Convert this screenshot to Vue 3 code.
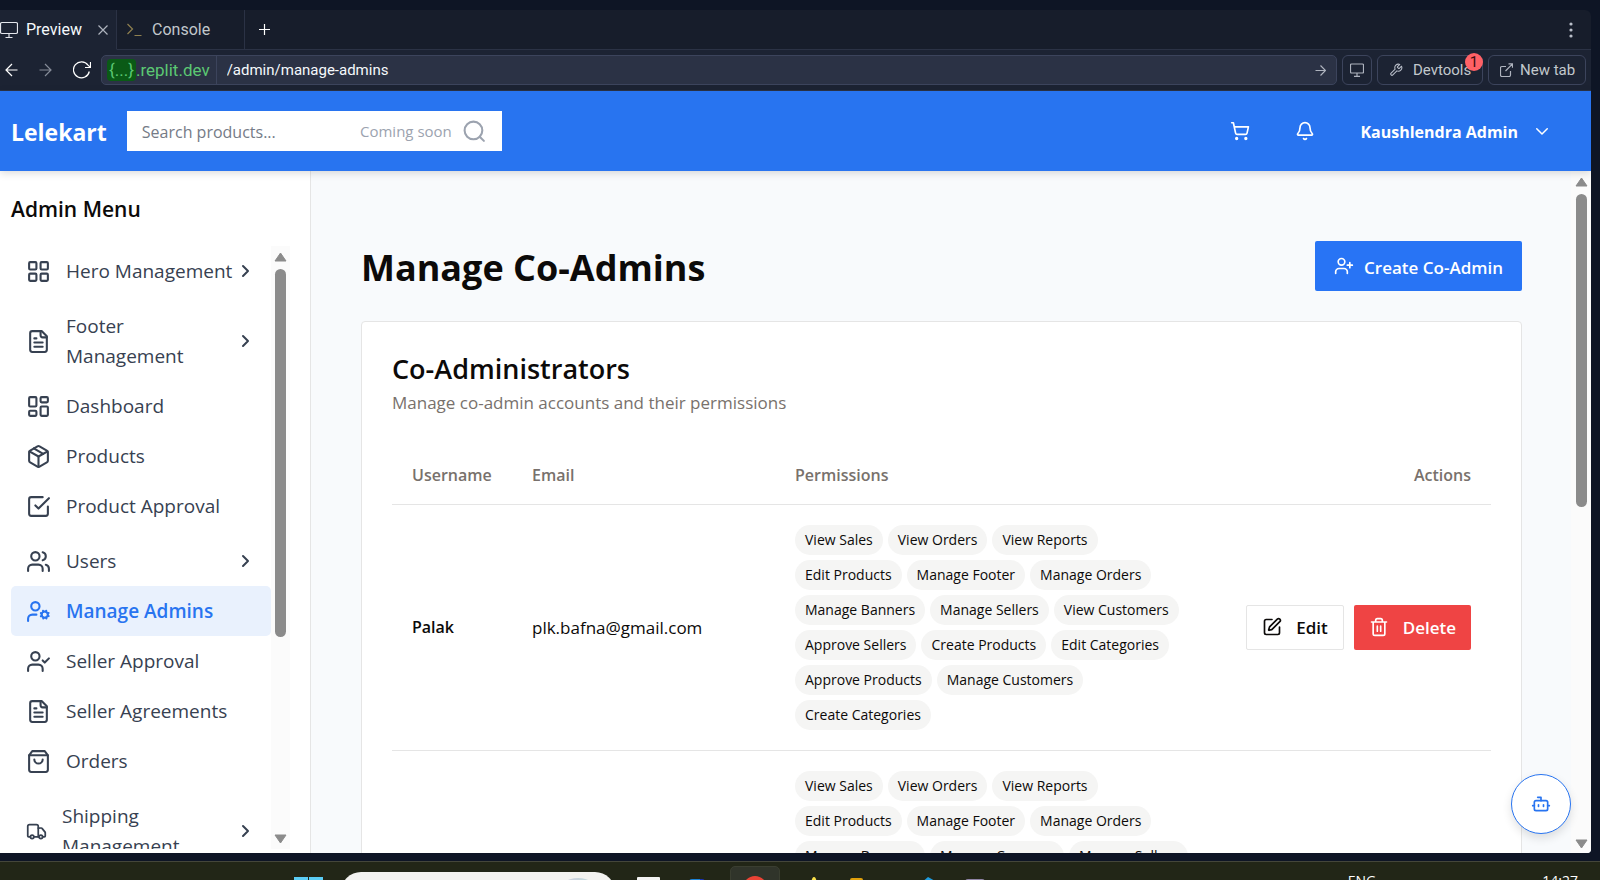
<script setup>
const nav = [
  { label: 'Hero Management', icon: 'grid', group: true },
  { label: 'Footer Management', icon: 'file', group: true },
  { label: 'Dashboard', icon: 'dashboard' },
  { label: 'Products', icon: 'box' },
  { label: 'Product Approval', icon: 'check' },
  { label: 'Users', icon: 'users', group: true },
  { label: 'Manage Admins', icon: 'cog', active: true },
  { label: 'Seller Approval', icon: 'usercheck' },
  { label: 'Seller Agreements', icon: 'file' },
  { label: 'Orders', icon: 'bag' },
  { label: 'Shipping Management', icon: 'truck', group: true, small: true },
]

const icons = {
  grid: '<rect width="7" height="7" x="3" y="3" rx="1"/><rect width="7" height="7" x="14" y="3" rx="1"/><rect width="7" height="7" x="14" y="14" rx="1"/><rect width="7" height="7" x="3" y="14" rx="1"/>',
  file: '<path d="M15 2H6a2 2 0 0 0-2 2v16a2 2 0 0 0 2 2h12a2 2 0 0 0 2-2V7Z"/><path d="M14 2v4a2 2 0 0 0 2 2h4"/><path d="M10 9H8"/><path d="M16 13H8"/><path d="M16 17H8"/>',
  dashboard: '<rect width="7" height="9" x="3" y="3" rx="1"/><rect width="7" height="5" x="14" y="3" rx="1"/><rect width="7" height="9" x="14" y="12" rx="1"/><rect width="7" height="5" x="3" y="16" rx="1"/>',
  box: '<path d="m7.5 4.27 9 5.15"/><path d="M21 8a2 2 0 0 0-1-1.73l-7-4a2 2 0 0 0-2 0l-7 4A2 2 0 0 0 3 8v8a2 2 0 0 0 1 1.73l7 4a2 2 0 0 0 2 0l7-4A2 2 0 0 0 21 16Z"/><path d="m3.3 7 8.7 5 8.7-5"/><path d="M12 22V12"/>',
  check: '<path d="m9 11 3 3L22 4"/><path d="M21 12v7a2 2 0 0 1-2 2H5a2 2 0 0 1-2-2V5a2 2 0 0 1 2-2h11"/>',
  users: '<path d="M16 21v-2a4 4 0 0 0-4-4H6a4 4 0 0 0-4 4v2"/><circle cx="9" cy="7" r="4"/><path d="M22 21v-2a4 4 0 0 0-3-3.87"/><path d="M16 3.13a4 4 0 0 1 0 7.75"/>',
  cog: '<circle cx="9" cy="7" r="4"/><path d="M10 15H6a4 4 0 0 0-4 4v2"/><circle cx="18" cy="15" r="3"/><path d="m21.7 16.4-.9-.3"/><path d="m15.2 13.9-.9-.3"/><path d="m16.6 18.7.3-.9"/><path d="m19.1 12.2.3-.9"/><path d="m19.6 18.7-.4-1"/><path d="m16.8 12.3-.4-1"/><path d="m14.3 16.6 1-.4"/><path d="m20.7 13.8 1-.4"/>',
  usercheck: '<path d="M16 21v-2a4 4 0 0 0-4-4H6a4 4 0 0 0-4 4v2"/><circle cx="9" cy="7" r="4"/><path d="m16 11 2 2 4-4"/>',
  bag: '<path d="M6 2 3 6v14a2 2 0 0 0 2 2h14a2 2 0 0 0 2-2V6l-3-4Z"/><path d="M3 6h18"/><path d="M16 10a4 4 0 0 1-8 0"/>',
  truck: '<path d="M14 18V6a2 2 0 0 0-2-2H4a2 2 0 0 0-2 2v11a1 1 0 0 0 1 1h2"/><path d="M15 18H9"/><path d="M19 18h2a1 1 0 0 0 1-1v-3.65a1 1 0 0 0-.22-.62l-3.48-4.35A1 1 0 0 0 17.52 8H14"/><circle cx="17" cy="18" r="2"/><circle cx="7" cy="18" r="2"/>',
}

const rows = [
  {
    name: 'Palak',
    email: 'plk.bafna@gmail.com',
    permissions: ['View Sales', 'View Orders', 'View Reports', 'Edit Products', 'Manage Footer', 'Manage Orders', 'Manage Banners', 'Manage Sellers', 'View Customers', 'Approve Sellers', 'Create Products', 'Edit Categories', 'Approve Products', 'Manage Customers', 'Create Categories'],
  },
  {
    name: '',
    email: '',
    permissions: ['View Sales', 'View Orders', 'View Reports', 'Edit Products', 'Manage Footer', 'Manage Orders', 'Manage Banners', 'Manage Coupons', 'Manage Sellers'],
  },
]
</script>

<template>
  <div class="screen">
    <div class="window">
      <div class="tabs">
        <button class="tab active">
          <svg width="18" height="18" viewBox="0 0 18 18" class="thin"><rect x="0.5" y="1.5" width="17" height="11" rx="1.5" /><path d="M9 13v3M5.5 16.5h7" /></svg>
          <span class="tab-name">Preview</span>
          <svg width="10" height="10" viewBox="0 0 10 10" class="thin dim"><path d="m.5.5 9 9m0-9-9 9" /></svg>
        </button>
        <button class="tab console">
          <svg width="15" height="14" viewBox="0 0 15 14" class="thin prompt"><path d="m.5 1 5 5-5 5M7.5 12.5h7" /></svg>
          <span>Console</span>
        </button>
        <button class="tab plus" aria-label="New tab">
          <svg width="11" height="11" viewBox="0 0 11 11" class="thin white"><path d="M5.5 0v11M0 5.5h11" /></svg>
        </button>
        <button class="more" aria-label="More">
          <svg width="4" height="16" viewBox="0 0 4 16"><g fill="#b9bec9"><circle cx="2" cy="2" r="1.6" /><circle cx="2" cy="8" r="1.6" /><circle cx="2" cy="14" r="1.6" /></g></svg>
        </button>
      </div>

      <div class="toolbar">
        <div class="history">
          <button aria-label="Back"><svg width="13" height="14" viewBox="0 0 13 14" class="thin white"><path d="M12.5 7H1m6-6L1 7l6 6" /></svg></button>
          <button aria-label="Forward"><svg width="13" height="14" viewBox="0 0 13 14" class="thin grey"><path d="M.5 7H12M6 1l6 6-6 6" /></svg></button>
          <button aria-label="Reload"><svg width="18" height="18" viewBox="0 0 18 18" class="thin white"><path d="M16.3 10.5A8 8 0 1 1 15 4.2L17.5 6.500M17.5 1v5.500H12" /></svg></button>
        </div>
        <div class="address">
          <span class="host"><b>{...}</b>.replit.dev</span>
          <input class="path" value="/admin/manage-admins" aria-label="Path" />
          <button class="go" aria-label="Go"><svg width="11" height="11" viewBox="0 0 11 11" class="thin dim"><path d="M.5 5.5h10M5.5.5l5 5-5 5" /></svg></button>
        </div>
        <button class="tool square" aria-label="Device">
          <svg width="14" height="14" viewBox="0 0 14 14" class="thin dim"><rect x="0.5" y="1" width="13" height="9" rx="1" /><path d="M7 10v3M4 13.3h6" /></svg>
        </button>
        <button class="tool devtools">
          <svg width="14" height="14" viewBox="0 0 24 24" fill="none" stroke="#b9bec9" stroke-width="1.8" stroke-linejoin="round"><path d="M14.7 6.3a1 1 0 0 0 0 1.4l1.6 1.6a1 1 0 0 0 1.4 0l3.77-3.77a6 6 0 0 1-7.94 7.94l-6.91 6.91a2.12 2.12 0 0 1-3-3l6.91-6.91a6 6 0 0 1 7.94-7.94l-3.76 3.76z" /></svg>
          <span>Devtools</span>
          <i class="count">1</i>
        </button>
        <button class="tool newtab">
          <svg width="13" height="14" viewBox="0 0 13 14" class="thin dim"><path d="M6 3.5H2a1.5 1.5 0 0 0-1.5 1.5v7A1.5 1.5 0 0 0 2 13.5h7a1.5 1.5 0 0 0 1.5-1.5V8M8.5.8h4v4M12.5.8 5.5 8" /></svg>
          <span>New tab</span>
        </button>
      </div>

      <div class="site">
        <header class="header">
          <a class="brand" href="#">Lelekart</a>
          <div class="search">
            <input type="text" placeholder="Search products..." aria-label="Search products" />
            <span class="soon">Coming soon</span>
            <svg width="25" height="25" viewBox="0 0 24 24" class="line"><circle cx="11" cy="11" r="8.5" /><path d="m21 21-4-4" /></svg>
          </div>
          <div class="account">
            <button aria-label="Cart"><svg width="20" height="20" viewBox="0 0 24 24" class="line"><circle cx="8" cy="21" r="1" /><circle cx="19" cy="21" r="1" /><path d="M2.05 2.05h2l2.66 12.42a2 2 0 0 0 2 1.58h9.78a2 2 0 0 0 1.95-1.57l1.65-7.43H5.12" /></svg></button>
            <button aria-label="Notifications"><svg width="20" height="20" viewBox="0 0 24 24" class="line"><path d="M10.268 21a2 2 0 0 0 3.464 0" /><path d="M3.262 15.326A1 1 0 0 0 4 17h16a1 1 0 0 0 .74-1.673C19.41 13.956 18 12.499 18 8A6 6 0 0 0 6 8c0 4.499-1.411 5.956-2.738 7.326" /></svg></button>
            <button class="user"><span>Kaushlendra Admin</span>
              <svg width="20" height="20" viewBox="0 0 24 24" class="line"><path d="m5 9 7 7 7-7" /></svg>
            </button>
          </div>
        </header>

        <aside class="sidebar">
          <h2>Admin Menu</h2>
          <div class="scroller">
            <nav>
              <a v-for="item in nav" :key="item.label" href="#" :class="{ group: item.group, active: item.active, small: item.small }">
                <svg viewBox="0 0 24 24" class="line" v-html="icons[item.icon]"></svg>
                <span>{{ item.label }}</span>
                <svg v-if="item.group" class="line chevron" viewBox="0 0 20 20"><path d="m7 5 5 5-5 5" /></svg>
              </a>
            </nav>
            <div class="track">
              <svg width="13" height="10" viewBox="0 0 13 10"><path d="M6.5 1 12 9H1Z" /></svg>
              <div class="rail"><div class="thumb side"></div></div>
              <svg width="13" height="10" viewBox="0 0 13 10"><path d="M6.5 9 12 1H1Z" /></svg>
            </div>
          </div>
        </aside>

        <main class="main">
          <div class="title">
            <h1>Manage Co-Admins</h1>
            <button class="create">
              <svg width="20" height="20" viewBox="0 0 24 24" class="line"><path d="M16 21v-2a4 4 0 0 0-4-4H6a4 4 0 0 0-4 4v2" /><circle cx="9" cy="7" r="4" /><path d="M19 8v6M22 11h-6" /></svg>
              <span>Create Co-Admin</span>
            </button>
          </div>
          <section class="card">
            <h3>Co-Administrators</h3>
            <p>Manage co-admin accounts and their permissions</p>
            <table>
              <thead>
                <tr>
                  <th class="c-name">Username</th>
                  <th class="c-mail">Email</th>
                  <th>Permissions</th>
                  <th class="c-act">Actions</th>
                </tr>
              </thead>
              <tbody>
                <tr v-for="(row, i) in rows" :key="i">
                  <td class="name">{{ row.name }}</td>
                  <td>{{ row.email }}</td>
                  <td>
                    <div class="chips"><span v-for="p in row.permissions" :key="p">{{ p }}</span></div>
                  </td>
                  <td>
                    <div v-if="row.name" class="actions">
                      <button class="edit">
                        <svg width="20" height="20" viewBox="0 0 24 24" class="line"><path d="M12 3H5a2 2 0 0 0-2 2v14a2 2 0 0 0 2 2h14a2 2 0 0 0 2-2v-7" /><path d="M18.375 2.625a1 1 0 0 1 3 3l-9.013 9.014a2 2 0 0 1-.853.505l-2.873.84a.5.5 0 0 1-.62-.62l.84-2.873a2 2 0 0 1 .506-.852z" /></svg>
                        Edit
                      </button>
                      <button class="delete">
                        <svg width="20" height="20" viewBox="0 0 24 24" class="line"><path d="M3 6h18M19 6v14c0 1-1 2-2 2H7c-1 0-2-1-2-2V6M8 6V4c0-1 1-2 2-2h4c1 0 2 1 2 2v2M10 11v6M14 11v6" /></svg>
                        Delete
                      </button>
                    </div>
                  </td>
                </tr>
              </tbody>
            </table>
          </section>
        </main>
        <div class="track page">
          <svg width="13" height="10" viewBox="0 0 13 10"><path d="M6.5 1 12 9H1Z" /></svg>
          <div class="rail"><div class="thumb body"></div></div>
          <svg width="13" height="10" viewBox="0 0 13 10"><path d="M6.5 9 12 1H1Z" /></svg>
        </div>
        <button class="bot" aria-label="Assistant">
          <svg width="20" height="20" viewBox="0 0 24 24" class="line"><path d="M12 8V4H8" /><rect width="16" height="12" x="4" y="8" rx="2" /><path d="M2 14h2M20 14h2M15 13v2M9 13v2" /></svg>
        </button>
      </div>
    </div>

    <footer class="taskbar">
      <div class="apps">
        <svg class="app-start" width="29" height="29" viewBox="0 0 29 29"><path d="M0 0h14v14H0zM15 0h14v14H15zM0 15h14v14H0zM15 15h14v14H15z" fill="#5bcdf5" /></svg>
        <div class="pill"><i></i></div>
        <svg class="app-view" width="24" height="24" viewBox="0 0 24 24"><rect width="23" height="20" rx="1" fill="#f3f3f3" /></svg>
        <svg class="app-blue" width="16" height="20" viewBox="0 0 16 20"><path d="M0 20V5q0-3 3-3h8v18z" fill="#1b83d8" /><path d="M11 2h2a3 3 0 0 1 3 3v15h-5z" fill="#1b35b8" /></svg>
        <div class="app-open"><svg width="24" height="24" viewBox="0 0 24 24"><circle cx="12" cy="12" r="12" fill="#ea4335" /></svg></div>
        <svg class="app-star" width="12" height="20" viewBox="0 0 12 20"><path d="M6 0q1 0 1.5 1L12 12H0L4.5 1Q5 0 6 0Z" fill="#f9e04a" /></svg>
        <svg class="app-folder" width="13" height="20" viewBox="0 0 13 20"><path d="M0 20V3q0-2 2-2h9q2 0 2 2v17z" fill="#dfa00c" /></svg>
        <svg class="app-code" width="16" height="20" viewBox="0 0 16 20"><path d="M0 6 7 0l9 5v15H0Z" fill="#1f9cdf" /></svg>
        <svg class="app-last" width="20" height="20" viewBox="0 0 20 20"><path d="M0 20V5q0-3 3-3h14q3 0 3 3v15z" fill="#8f84a6" /></svg>
      </div>
      <div class="tray"><span>ENG</span><span>14:27</span></div>
    </footer>
  </div>
</template>

<style>
html,
body {
  height: 100%;
  margin: 0;
  overflow: hidden;
}
</style>

<style scoped>
* {
  box-sizing: border-box;
}
.screen {
  height: 100vh;
  display: flex;
  flex-direction: column;
  background: #0e1525;
  padding-top: 10px;
  color: #0c0a09;
  font-family: 'Open Sans', 'Noto Sans', sans-serif;
  font-size: 16px;
  overflow: hidden;
}
button {
  font: inherit;
  color: inherit;
  background: none;
  border: 0;
  padding: 0;
  display: flex;
  align-items: center;
  white-space: nowrap;
}
a {
  color: inherit;
  text-decoration: none;
}
svg {
  flex: none;
  display: block;
}
.line {
  fill: none;
  stroke: currentColor;
  stroke-width: 2;
  stroke-linecap: round;
  stroke-linejoin: round;
}
.thin {
  fill: none;
  stroke: #e3e6ec;
  stroke-width: 1.2;
}
.white {
  stroke: #fff;
}
.dim {
  stroke: #aeb3be;
}
.grey {
  stroke: #858b98;
}
.prompt {
  stroke: #8f8050;
}
.window {
  flex: 1;
  min-height: 0;
  margin-right: 9px;
  display: flex;
  flex-direction: column;
  border-radius: 0 6px 4px 0;
  overflow: hidden;
}
.tabs {
  height: 40px;
  flex: none;
  display: flex;
  background: #171d2b;
  color: #c2c8cc;
  font-family: Roboto, sans-serif;
}
.tab {
  border-right: 1px solid #2b3245;
  border-bottom: 1px solid #2b3245;
}
.tab.active {
  width: 117px;
  padding-right: 8px;
  background: #1c2333;
  border-bottom-color: #1c2333;
  color: #f5f9fc;
}
.tab-name {
  flex: 1;
  text-align: left;
  padding-left: 8px;
}
.tab.console {
  width: 128px;
  padding-left: 10px;
  gap: 10px;
}
.tab.plus {
  flex: 1;
  padding-left: 14px;
  border-right: 0;
}
.more {
  width: 40px;
  padding-left: 18px;
  border-bottom: 1px solid #2b3245;
}
.toolbar {
  height: 41px;
  flex: none;
  display: flex;
  align-items: center;
  gap: 5px;
  padding-right: 5px;
  background: #1c2333;
  border-bottom: 1px solid #2b3245;
  color: #c2c8cc;
  font-family: Roboto, sans-serif;
  font-size: 15px;
}
.history {
  width: 96px;
  display: flex;
  align-items: center;
  justify-content: space-between;
  padding: 0 5px;
}
.address {
  flex: 1;
  height: 30px;
  display: flex;
  align-items: stretch;
  background: #2b3245;
  border: 1px solid #3c445c;
  border-radius: 5px;
}
.host {
  display: flex;
  align-items: center;
  padding: 0 6px 0 5px;
  color: #5bc873;
  font-size: 17px;
  border-right: 1px solid #3c445c;
}
.host b {
  font-weight: 400;
  background: #0a5a16;
  border-radius: 4px;
  padding: 1px 2px;
}
.path {
  flex: 1;
  min-width: 0;
  border: 0;
  background: none;
  color: #f5f9fc;
  font: inherit;
  padding: 0 10px;
}
.go {
  padding-right: 10px;
}
.tool {
  position: relative;
  height: 30px;
  border: 1px solid #3c445c;
  border-radius: 6px;
}
.square {
  width: 30px;
  justify-content: center;
}
.devtools {
  width: 106px;
  padding-left: 11px;
  gap: 10px;
}
.newtab {
  width: 98px;
  padding-left: 11px;
  gap: 7px;
}
.count {
  position: absolute;
  right: -1px;
  top: -3px;
  width: 18px;
  height: 18px;
  border-radius: 50%;
  background: #ff6166;
  color: #3a0d10;
  font-style: normal;
  font-size: 15px;
  line-height: 18px;
}
.site {
  position: relative;
  flex: 1;
  min-height: 0;
  display: grid;
  grid-template: 80px minmax(0, 1fr) / 311px minmax(0, 1fr) 20px;
  background: #f8fafc;
}
.header {
  grid-column: 1 / -1;
  z-index: 1;
  display: flex;
  align-items: center;
  gap: 20px;
  padding: 0 40px 0 11px;
  background: #2874f0;
  color: #fff;
  box-shadow: 0 2px 8px rgba(0, 0, 0, 0.15);
}
.brand {
  padding-top: 2px;
  font-size: 23px;
  font-weight: 700;
}
.search {
  width: 375px;
  height: 40px;
  display: flex;
  align-items: center;
  background: #fff;
  padding: 0 15px;
}
.search input {
  flex: 1;
  min-width: 0;
  border: 0;
  padding: 2px 0 0;
  font: inherit;
}
.search input::placeholder {
  color: #757b87;
}
.soon {
  color: #9ca3af;
  font-size: 15px;
  padding-right: 10px;
}
.search svg {
  color: #9ca3af;
}
.account {
  margin-left: auto;
  display: flex;
  align-items: center;
  gap: 45px;
}
.user {
  font-weight: 700;
  gap: 15px;
}
.user span,
.create span {
  padding-top: 2px;
}
.user svg {
  width: 18px;
  height: 18px;
}
.sidebar {
  display: flex;
  flex-direction: column;
  background: #fff;
  border-right: 1px solid #e5e5e5;
  min-height: 0;
  padding: 21px 20px 4px 11px;
}
.sidebar h2 {
  margin: 0;
  font-size: 21px;
  line-height: 34px;
  font-weight: 600;
  padding-bottom: 20px;
}
.scroller {
  flex: 1;
  min-height: 0;
  display: flex;
}
nav {
  flex: 1;
  min-width: 0;
  overflow: hidden;
  color: #374151;
}
nav a {
  display: flex;
  align-items: center;
  min-height: 50px;
  padding: 10px 15px;
  gap: 15px;
  font-size: 19px;
  line-height: 30px;
  border-radius: 5px;
}
nav a > svg:first-child {
  width: 25px;
  height: 25px;
}
nav a.small > svg:first-child {
  width: 21px;
  height: 21px;
}
nav a span {
  flex: 1;
}
nav a.group {
  margin-top: 5px;
}
nav a.group:first-child {
  margin-top: 0;
}
nav a.group > span {
  margin-right: -15px;
}
nav a.active {
  background: #e9f1fd;
  color: #2874f0;
  font-weight: 600;
}
nav .chevron {
  width: 20px;
  height: 20px;
}
.track {
  width: 19px;
  flex: none;
  display: flex;
  flex-direction: column;
  align-items: center;
  padding: 6px 0 5px;
  gap: 7px;
  background: #fbfbfb;
}
.track path {
  fill: #8b8b8b;
  stroke: #8b8b8b;
  stroke-linejoin: round;
}
.rail {
  flex: 1;
}
.thumb {
  width: 11px;
  border-radius: 6px;
  background: #8b8b8b;
}
.side {
  height: 66%;
}
.body {
  height: 49%;
}
.page {
  width: 20px;
  padding-bottom: 4px;
}
.main {
  padding: 70px 49px 0 50px;
  min-height: 0;
  overflow: hidden;
}
.title {
  display: flex;
  align-items: center;
  justify-content: space-between;
}
h1 {
  margin: 0;
  padding-top: 2px;
  font-size: 36px;
  line-height: 45px;
  font-weight: 700;
}
.create {
  height: 50px;
  padding: 0 19px;
  gap: 10px;
  background: #2874f5;
  color: #fff;
  border-radius: 2px;
  font-size: 17px;
  font-weight: 600;
}
.card {
  margin-top: 30px;
  height: 900px;
  padding: 30px;
  background: #fff;
  border: 1px solid #e5e5e5;
  border-radius: 4px;
}
h3 {
  margin: 0;
  font-size: 27px;
  line-height: 33px;
  font-weight: 600;
}
.card p {
  margin: 6px 0 31px;
  color: #78716c;
  font-size: 17px;
  line-height: 24px;
}
table {
  width: 100%;
  table-layout: fixed;
  border-collapse: collapse;
}
th {
  height: 58px;
  padding: 0 20px;
  text-align: left;
  color: #78716c;
  font-size: 16px;
  font-weight: 600;
}
tr {
  border-bottom: 1px solid #e5e5e5;
}
.c-name {
  width: 120px;
}
.c-mail {
  width: 263px;
}
.c-act {
  width: 265px;
  text-align: right;
}
td {
  padding: 20px;
  font-size: 17px;
}
td.name {
  font-size: 16px;
  font-weight: 600;
}
.chips {
  display: flex;
  flex-wrap: wrap;
  gap: 5px;
}
.chips span {
  padding: 0 10px;
  border-radius: 15px;
  background: #f5f5f4;
  font-size: 14px;
  line-height: 30px;
}
.actions {
  display: flex;
  justify-content: flex-end;
  gap: 10px;
}
.actions button {
  height: 45px;
  padding: 0 15px;
  gap: 14px;
  border-radius: 2px;
  font-weight: 600;
}
.actions .edit {
  border: 1px solid #e5e5e5;
}
.actions .delete {
  background: #ef4444;
  color: #fff;
}
.bot {
  position: absolute;
  right: 20px;
  bottom: 19px;
  z-index: 2;
  width: 60px;
  height: 60px;
  justify-content: center;
  border: 1px solid #2874f0;
  border-radius: 50%;
  background: #fff;
  color: #2874f0;
  box-shadow: 0 4px 10px rgba(0, 0, 0, 0.12);
}
.taskbar {
  height: 19px;
  margin-top: 8px;
  flex: none;
  display: flex;
  justify-content: space-between;
  overflow: hidden;
  background: #222617;
  border-top: 1px solid #44463a;
}
.apps {
  display: flex;
  align-items: flex-start;
  padding-left: 294px;
}
.apps > svg {
  margin-top: 15px;
}
.pill {
  width: 274px;
  height: 40px;
  margin: 10px 22px 0 18px;
  padding: 6px 16px;
  border-radius: 20px;
  background: #f3f3f0;
}
.pill i {
  display: block;
  width: 42px;
  height: 30px;
  margin-left: auto;
  border-radius: 50%;
  background: linear-gradient(90deg, #d3cde0, #bfdedb);
}
.app-view {
  margin-right: 28px;
}
.app-blue {
  margin-right: 25px;
}
.app-open {
  width: 50px;
  height: 48px;
  margin-top: 4px;
  padding: 9px 12px;
  margin-right: 28px;
  border: 1px solid #3a3e30;
  border-radius: 5px;
  background: #30342a;
}
.app-star {
  margin-right: 30px;
}
.app-folder {
  margin-right: 58px;
}
.app-code {
  margin-right: 28px;
}
.tray {
  display: flex;
  gap: 166px;
  padding: 10px 22px 0 0;
  color: #fff;
  font-size: 14px;
  line-height: 18px;
}
</style>
